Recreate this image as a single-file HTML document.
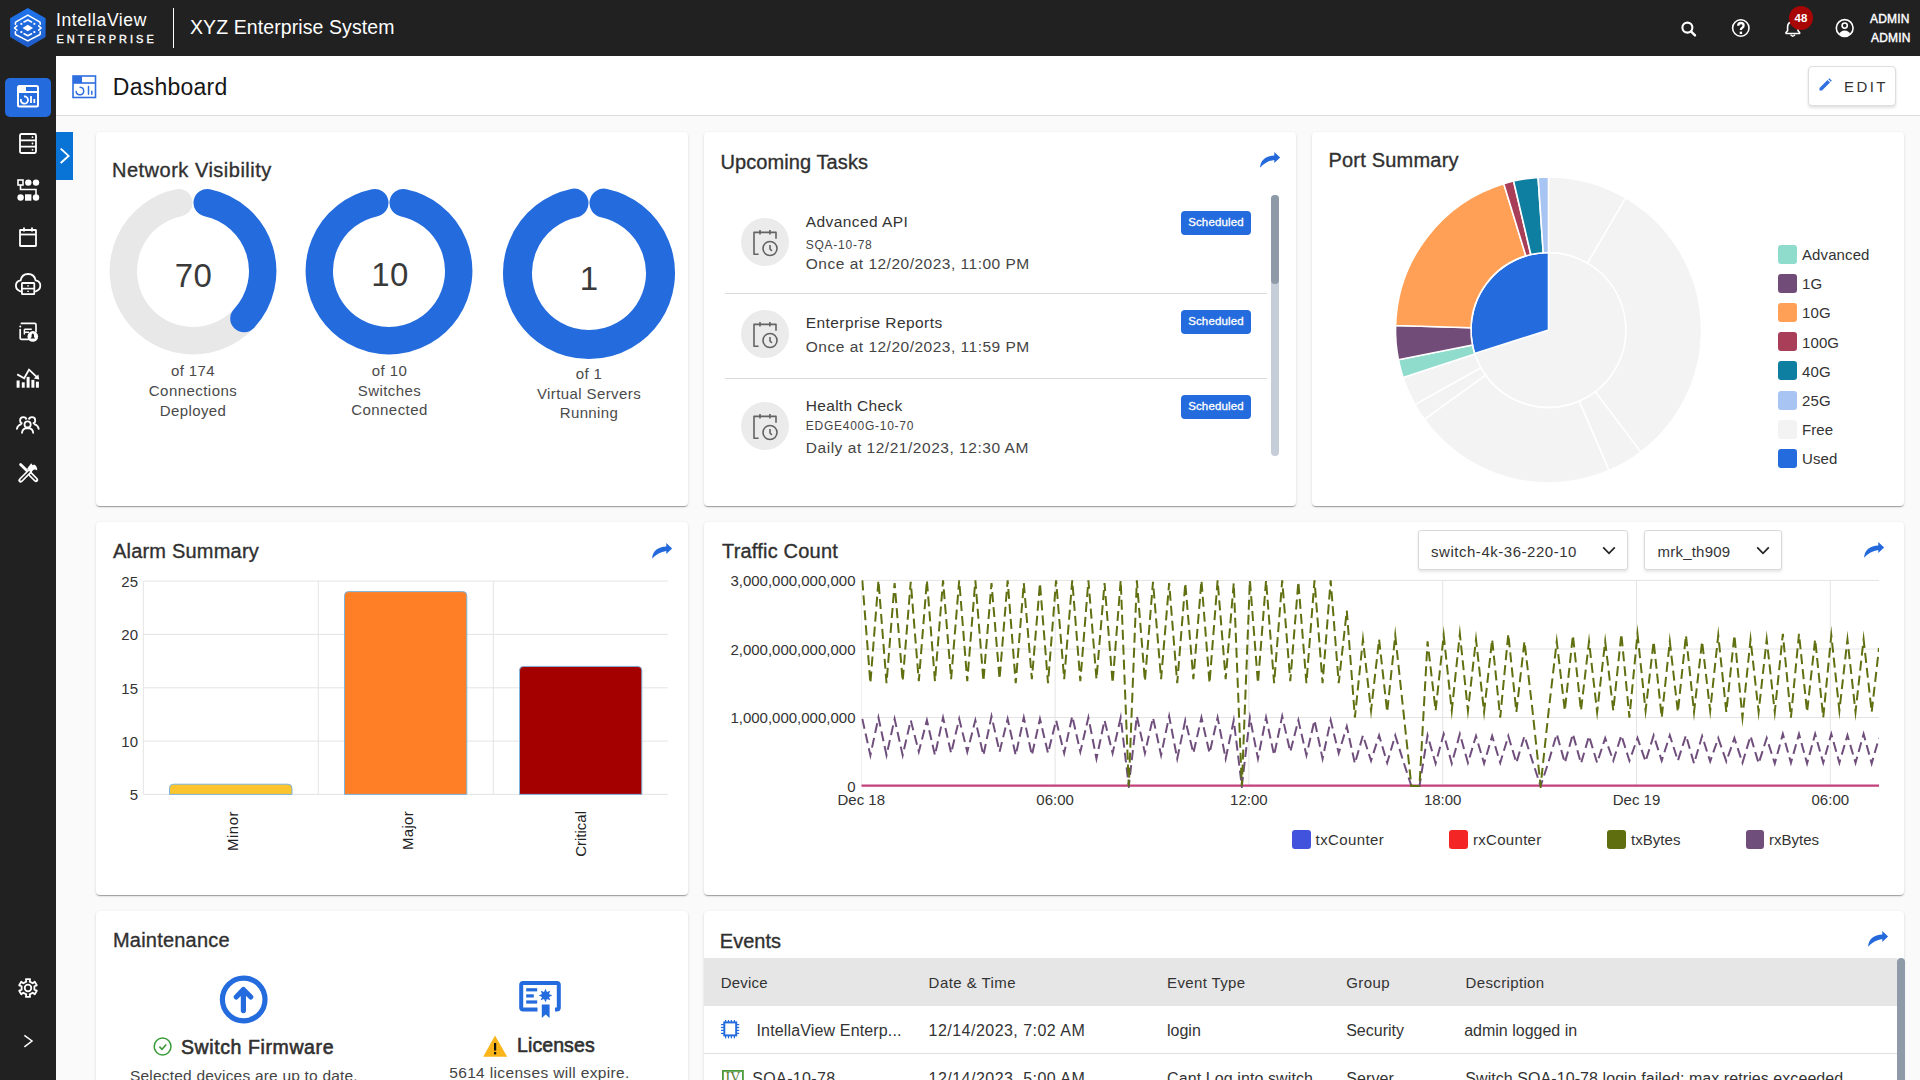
<!DOCTYPE html><html><head><meta charset="utf-8"><style>
html,body{margin:0;padding:0;width:1920px;height:1080px;overflow:hidden;background:#fafafa;font-family:"Liberation Sans",sans-serif;}
.t{position:absolute;white-space:nowrap;}
.card{position:absolute;background:#fff;border-radius:4px;box-shadow:0px 2px 1px -1px rgba(0,0,0,0.2),0px 1px 1px 0px rgba(0,0,0,0.14),0px 1px 3px 0px rgba(0,0,0,0.12);}
svg{overflow:visible}
</style></head><body>

<div style="position:absolute;left:0px;top:0px;width:1920px;height:56px;background:#212121;"></div>
<div style="position:absolute;left:0px;top:56px;width:56px;height:1024px;background:#212121;"></div>
<div style="position:absolute;left:56px;top:56px;width:1864px;height:59px;background:#fff;border-bottom:1px solid #dcdcdc;"></div>
<div class="card" style="left:96px;top:132px;width:592px;height:374px;"></div>
<div class="card" style="left:704px;top:132px;width:592px;height:374px;"></div>
<div class="card" style="left:1312px;top:132px;width:592px;height:374px;"></div>
<div class="card" style="left:96px;top:522px;width:592px;height:373px;"></div>
<div class="card" style="left:704px;top:522px;width:1200px;height:373px;"></div>
<div class="card" style="left:96px;top:911px;width:592px;height:200px;"></div>
<div class="card" style="left:704px;top:911px;width:1200px;height:200px;"></div>
<div style="position:absolute;left:56px;top:132px;width:17px;height:48px;background:#0a74d6;"></div>
<svg style="position:absolute;left:10px;top:8px;" width="36" height="40" viewBox="0 0 36 40">
<defs><linearGradient id="lg" x1="0" y1="0" x2="0" y2="1"><stop offset="0" stop-color="#1f74ec"/><stop offset="1" stop-color="#1f5cc9"/></linearGradient></defs>
<path d="M17.8,0.9 L34.8,10.6 L34.8,28.6 L17.8,38.5 L0.9,28.6 L0.9,10.6 Z" fill="url(#lg)" stroke="url(#lg)" stroke-width="1.6" stroke-linejoin="round"/>
<path d="M5.4,16.2 L5.4,14.9 Q5.4,14.3 6,13.9 L17.8,7.1 L29.6,13.9 Q30.2,14.3 30.2,14.9 L30.2,16.2" fill="none" stroke="#fff" stroke-width="1.6" stroke-linecap="round" stroke-linejoin="round"/>
<path d="M5.4,23.8 L5.4,25.8 Q5.4,26.4 6,26.8 L17.8,32.9 L29.6,26.8 Q30.2,26.4 30.2,25.8 L30.2,23.8" fill="none" stroke="#fff" stroke-width="1.6" stroke-linecap="round" stroke-linejoin="round"/>
<path d="M6.9,17.8 L4.5,20 L6.9,22.2 M28.7,17.8 L31.1,20 L28.7,22.2" fill="none" stroke="#fff" stroke-width="1.6" stroke-linecap="round" stroke-linejoin="round"/>
<path d="M14,14 L17.8,12 L21.6,14 M14,25.8 L17.8,27.8 L21.6,25.8" fill="none" stroke="#fff" stroke-width="1.6" stroke-linecap="round" stroke-linejoin="round"/>
<path d="M17.8,16.7 L23.1,20 L17.8,23.3 L12.5,20 Z" fill="#fff"/>
<rect x="10.4" y="14.9" width="1.9" height="1.9" fill="#fff"/><rect x="23.4" y="14.9" width="1.9" height="1.9" fill="#fff"/>
<rect x="10.4" y="23.1" width="1.9" height="1.9" fill="#fff"/><rect x="23.4" y="23.1" width="1.9" height="1.9" fill="#fff"/>
</svg>
<div class="t" style="left:56px;top:11.79px;font-size:17.5px;line-height:17.5px;color:#fff;font-weight:400;letter-spacing:0.6px;">IntellaView</div>
<div class="t" style="left:56.5px;top:33.69px;font-size:11px;line-height:11px;color:#fff;font-weight:400;letter-spacing:3.0px;-webkit-text-stroke:0.35px #fff;">ENTERPRISE</div>
<div style="position:absolute;left:172.5px;top:8px;width:1.5px;height:40px;background:#fff;"></div>
<div class="t" style="left:190px;top:18.09px;font-size:19.5px;line-height:19.5px;color:#fff;font-weight:400;letter-spacing:0.09px;">XYZ Enterprise System</div>
<svg style="position:absolute;left:1678px;top:19px;" width="20" height="20" viewBox="0 0 20 20"><circle cx="9.4" cy="8.6" r="5" fill="none" stroke="#fff" stroke-width="2.1"/><path d="M13,12.4 L17,16.4" stroke="#fff" stroke-width="2.4" stroke-linecap="round"/></svg>
<svg style="position:absolute;left:1730px;top:17px;" width="22" height="22" viewBox="0 0 22 22"><circle cx="10.8" cy="11" r="8.2" fill="none" stroke="#fff" stroke-width="1.6"/><path d="M8.2,8.8 Q8.2,6 10.9,6 Q13.6,6 13.6,8.5 Q13.6,10 12,10.9 Q10.9,11.6 10.9,13" fill="none" stroke="#fff" stroke-width="2.3" stroke-linecap="butt"/><rect x="9.7" y="14.6" width="2.4" height="2.4" fill="#fff"/></svg>
<svg style="position:absolute;left:1782px;top:17px;" width="22" height="22" viewBox="0 0 22 22"><path d="M4,16.5 L4,15.5 L5.6,13.8 L5.6,9.8 Q5.6,5.2 10.8,4.6 Q16,5.2 16,9.8 L16,13.8 L17.6,15.5 L17.6,16.5 Z" fill="none" stroke="#fff" stroke-width="1.6" stroke-linejoin="round"/><path d="M8.6,17.6 Q10.8,20.6 13,17.6" fill="none" stroke="#fff" stroke-width="1.6"/></svg>
<svg style="position:absolute;left:1789px;top:6px;" width="24" height="24" viewBox="0 0 24 24"><circle cx="12" cy="12" r="12" fill="#a80505"/></svg>
<div class="t" style="left:1801px;top:12.57px;font-size:11.5px;line-height:11.5px;color:#fff;font-weight:700;transform:translateX(-50%);">48</div>
<svg style="position:absolute;left:1834px;top:17px;" width="22" height="22" viewBox="0 0 22 22"><circle cx="10.7" cy="11" r="8.4" fill="none" stroke="#fff" stroke-width="1.6"/><circle cx="10.7" cy="8.6" r="2.6" fill="none" stroke="#fff" stroke-width="1.6"/><path d="M5.2,17 Q6.8,13.4 10.7,13.4 Q14.6,13.4 16.2,17 Q13.6,19.4 10.7,19.4 Q7.8,19.4 5.2,17 Z" fill="#fff"/></svg>
<div class="t" style="left:1870px;top:12.64px;font-size:12px;line-height:12px;color:#fff;font-weight:400;letter-spacing:0.2px;-webkit-text-stroke:0.4px #fff;">ADMIN</div>
<div class="t" style="left:1871px;top:31.54px;font-size:12px;line-height:12px;color:#fff;font-weight:400;letter-spacing:0.2px;-webkit-text-stroke:0.4px #fff;">ADMIN</div>
<svg style="position:absolute;left:72px;top:75px;" width="25" height="24" viewBox="0 0 25 24"><rect x="1" y="1" width="22.5" height="21.5" fill="none" stroke="#2f6fe0" stroke-width="1.6"/><rect x="1" y="1" width="9" height="7" fill="#2f6fe0"/><path d="M1,8 L23.5,8" stroke="#2f6fe0" stroke-width="1.6"/><path d="M8.1,12.2 A3.8,3.8 0 1 1 4.1,16.4" fill="none" stroke="#2f6fe0" stroke-width="1.5" stroke-linecap="round"/><path d="M16.5,11.6 L16.5,19.3 M19.8,16.2 L19.8,19.3" stroke="#2f6fe0" stroke-width="1.5" stroke-linecap="round"/></svg>
<div class="t" style="left:112.8px;top:75.53px;font-size:23px;line-height:23px;color:#161616;font-weight:400;letter-spacing:0.25px;">Dashboard</div>
<div style="position:absolute;left:1807.5px;top:66px;width:86px;height:38px;border:1px solid #dedede;border-radius:4px;background:#fff;box-shadow:0 2px 3px rgba(0,0,0,0.12);"></div>
<svg style="position:absolute;left:1818px;top:78px;" width="14" height="14" viewBox="0 0 14 14"><path d="M1.5,12.5 L1.5,10 L9.5,2 L12,4.5 L4,12.5 Z" fill="#2f6fe0"/><path d="M10.3,1.2 L11.3,0.2 L13.8,2.7 L12.8,3.7 Z" fill="#2f6fe0"/></svg>
<div class="t" style="left:1844px;top:79.30px;font-size:15px;line-height:15px;color:#333;font-weight:400;letter-spacing:2.4px;">EDIT</div>
<div style="position:absolute;left:5px;top:78px;width:46px;height:39px;background:#246bdd;border-radius:5px;"></div>
<svg style="position:absolute;left:17px;top:85px;" width="22" height="22" viewBox="0 0 22 22"><rect x="1" y="1" width="20" height="20.5" rx="1.5" fill="none" stroke="#fff" stroke-width="2"/><rect x="1" y="1" width="8" height="6" fill="#fff"/><path d="M1,7 L21,7" stroke="#fff" stroke-width="2"/><path d="M7,11.5 A3.6,3.6 0 1 1 4,14" fill="none" stroke="#fff" stroke-width="1.8"/><path d="M14,11 L14,18 M17.3,14 L17.3,18" stroke="#fff" stroke-width="1.8"/></svg>
<svg style="position:absolute;left:19px;top:133px;" width="18" height="21" viewBox="0 0 18 21"><rect x="1" y="1" width="16" height="19" rx="1.5" fill="none" stroke="#fff" stroke-width="1.8"/><path d="M1,7.3 L17,7.3 M1,13.6 L17,13.6" stroke="#fff" stroke-width="1.8"/><circle cx="13.5" cy="4.2" r="0.9" fill="#fff"/><circle cx="13.5" cy="10.5" r="0.9" fill="#fff"/><circle cx="13.5" cy="16.8" r="0.9" fill="#fff"/></svg>
<svg style="position:absolute;left:17px;top:179px;" width="23" height="23" viewBox="0 0 23 23"><rect x="1" y="1" width="5" height="5" fill="none" stroke="#fff" stroke-width="1.6"/><circle cx="11.3" cy="3.6" r="3.2" fill="#fff"/><circle cx="19" cy="3.6" r="3.2" fill="#fff"/><path d="M3.5,6 L3.5,10.5 L19,10.5 L19,16" fill="none" stroke="#fff" stroke-width="1.6"/><circle cx="3.6" cy="18.5" r="3.2" fill="#fff"/><rect x="8" y="15.3" width="6.4" height="6.4" fill="#fff"/><circle cx="19" cy="18.5" r="3.2" fill="#fff"/></svg>
<svg style="position:absolute;left:19px;top:227px;" width="18" height="20" viewBox="0 0 18 20"><rect x="1" y="3" width="16" height="16" rx="0.5" fill="none" stroke="#fff" stroke-width="1.8"/><path d="M1,7.5 L17,7.5" stroke="#fff" stroke-width="1.8"/><path d="M5,0.5 L5,4.5 M13,0.5 L13,4.5" stroke="#fff" stroke-width="1.8"/></svg>
<svg style="position:absolute;left:15px;top:273px;" width="26" height="23" viewBox="0 0 26 23"><path d="M5.4,18.3 Q0.9,17 0.9,12.6 Q0.9,8.2 5.6,7.4 Q6.8,1 13.1,1 Q19.4,1 20.6,7.4 Q25.3,8.2 25.3,12.6 Q25.3,17 20.8,18.3" fill="none" stroke="#fff" stroke-width="1.8" stroke-linecap="round"/><rect x="6.9" y="10" width="12.4" height="11.2" rx="0.6" fill="#212121" stroke="#fff" stroke-width="1.8"/><path d="M6.9,15.6 L19.3,15.6" stroke="#fff" stroke-width="1.6"/><path d="M12.3,12.9 L13.9,12.9 M12.3,18.3 L13.9,18.3" stroke="#fff" stroke-width="1.3"/></svg>
<svg style="position:absolute;left:19px;top:322px;" width="20" height="20" viewBox="0 0 20 20"><path d="M2.4,1.4 L15.6,1.4 Q17,1.4 17,2.8 L17,9.6 M9.2,17.3 L2.6,17.3 Q1.2,17.3 1.2,15.9 L1.2,7.6" fill="none" stroke="#fff" stroke-width="1.7" stroke-linecap="round"/><circle cx="1.3" cy="4.6" r="1" fill="#fff"/><path d="M5.4,7.2 L12.8,7.2 M5.4,10.3 L10,10.3 M5.4,7.2 L5.4,12.4" stroke="#fff" stroke-width="1.5"/><circle cx="13.8" cy="14.4" r="5.3" fill="#fff"/><path d="M11.4,16.6 L16.2,16.6 L15,15 L15,13.2 Q15,11.6 13.8,11.6 Q12.6,11.6 12.6,13.2 L12.6,15 Z" fill="#212121"/></svg>
<svg style="position:absolute;left:16px;top:368px;" width="25" height="21" viewBox="0 0 25 21"><path d="M1.2,6.4 L8.2,10.2 L13,1.6 L21.2,9.4" fill="none" stroke="#fff" stroke-width="1.8" stroke-linejoin="miter"/><path d="M17.8,10.6 L23.2,11.6 L22.4,6.4 Z" fill="#fff"/><rect x="0.6" y="12.5" width="3" height="7.2" fill="#fff"/><rect x="5.8" y="14.3" width="2.9" height="5.4" fill="#fff"/><rect x="10.6" y="8.9" width="3" height="10.8" fill="#fff"/><rect x="15.4" y="11.9" width="3" height="7.8" fill="#fff"/><rect x="19.9" y="13.7" width="3" height="6" fill="#fff"/></svg>
<svg style="position:absolute;left:16px;top:416px;" width="24" height="18" viewBox="0 0 24 18"><circle cx="7.3" cy="4.4" r="3.2" fill="none" stroke="#fff" stroke-width="1.8"/><circle cx="16" cy="4.4" r="3.2" fill="none" stroke="#fff" stroke-width="1.8"/><path d="M0.9,12.9 Q1.6,9.4 4.8,8.4 M22.7,12.9 Q22,9.4 18.8,8.4" fill="none" stroke="#fff" stroke-width="1.8" stroke-linecap="round"/><circle cx="11.6" cy="8.7" r="5.4" fill="#212121"/><path d="M3.6,17.2 Q5,11.4 11.6,11.2 Q18.2,11.4 19.6,17.2 Z" fill="#212121"/><circle cx="11.6" cy="8.4" r="3.1" fill="none" stroke="#fff" stroke-width="1.8"/><path d="M6,16.8 Q6.4,12.2 11.6,12 Q16.8,12.2 17.2,16.8" fill="none" stroke="#fff" stroke-width="1.8" stroke-linecap="round"/></svg>
<svg style="position:absolute;left:19px;top:462px;" width="20" height="21" viewBox="0 0 20 21"><path d="M1.6,2.4 L8.8,9.6" stroke="#fff" stroke-width="2.8" stroke-linecap="round"/><path d="M11.2,12 L17,17.8" stroke="#fff" stroke-width="4.6" stroke-linecap="round"/><path d="M11.6,12.4 L16.6,17.4" stroke="#212121" stroke-width="1.4" stroke-linecap="round"/><path d="M1.6,18.4 L10.6,9.4" stroke="#fff" stroke-width="4.6" stroke-linecap="round"/><path d="M2,18 L10.2,9.8" stroke="#212121" stroke-width="1.4" stroke-linecap="round"/><path d="M8.2,6.4 L12.2,1.2 L13.6,3.2 L15.2,2.4 Q18.4,4 18.2,8.6 Q16.6,7 14.6,7.8 L12,10.4 Z" fill="#fff"/></svg>
<svg style="position:absolute;left:17px;top:976.5px;" width="22" height="22" viewBox="0 0 22 22"><path d="M8.93,2.04 L13.07,2.04 L12.71,4.62 L15.67,6.33 L17.73,4.73 L19.80,8.31 L17.38,9.29 L17.38,12.71 L19.80,13.69 L17.73,17.27 L15.67,15.67 L12.71,17.38 L13.07,19.96 L8.93,19.96 L9.29,17.38 L6.33,15.67 L4.27,17.27 L2.20,13.69 L4.62,12.71 L4.62,9.29 L2.20,8.31 L4.27,4.73 L6.33,6.33 L9.29,4.62 Z" fill="none" stroke="#fff" stroke-width="1.8" stroke-linejoin="round"/><circle cx="11" cy="11" r="3.3" fill="none" stroke="#fff" stroke-width="1.8"/></svg>
<svg style="position:absolute;left:22px;top:1034px;" width="12" height="16" viewBox="0 0 12 16"><path d="M2.4,1.4 L10,7 L2.4,12.8" fill="none" stroke="#fff" stroke-width="1.5"/></svg>
<svg style="position:absolute;left:59px;top:147px;" width="12" height="18" viewBox="0 0 12 18"><path d="M1.7,1.6 L9.6,8.9 L1.7,16" fill="none" stroke="#fff" stroke-width="1.9"/></svg>
<div class="t" style="left:112px;top:159.97px;font-size:20px;line-height:20px;color:#303030;font-weight:400;letter-spacing:0.5px;-webkit-text-stroke:0.35px #303030;">Network Visibility</div>
<svg style="position:absolute;left:0px;top:0px;width:1px;height:1px;" width="1" height="1" viewBox="0 0 1 1"><path d="M243.90,318.62 A69.7,69.7 0 1 1 178.82,202.76" fill="none" stroke="#e8e8e8" stroke-width="27.4" stroke-linecap="round"/><path d="M207.18,202.76 A69.7,69.7 0 0 1 243.90,318.62" fill="none" stroke="#246bdd" stroke-width="27.4" stroke-linecap="round"/><path d="M403.18,202.76 A69.7,69.7 0 1 1 374.82,202.76" fill="none" stroke="#246bdd" stroke-width="27.4" stroke-linecap="round"/><path d="M603.99,203.09 A71.5,71.5 0 1 1 574.01,203.09" fill="none" stroke="#246bdd" stroke-width="29" stroke-linecap="round"/></svg>
<div class="t" style="left:193.5px;top:258.67px;font-size:33px;line-height:33px;color:#3a3a3a;font-weight:400;letter-spacing:0.5px;transform:translateX(-50%);">70</div>
<div class="t" style="left:390px;top:258.47px;font-size:33px;line-height:33px;color:#3a3a3a;font-weight:400;letter-spacing:0.5px;transform:translateX(-50%);">10</div>
<div class="t" style="left:589px;top:261.57px;font-size:33px;line-height:33px;color:#3a3a3a;font-weight:400;transform:translateX(-50%);">1</div>
<div class="t" style="left:193px;top:363.30px;font-size:15px;line-height:15px;color:#4a4a4a;font-weight:400;letter-spacing:0.4px;transform:translateX(-50%);">of 174</div>
<div class="t" style="left:193px;top:383.30px;font-size:15px;line-height:15px;color:#4a4a4a;font-weight:400;letter-spacing:0.45px;transform:translateX(-50%);">Connections</div>
<div class="t" style="left:193px;top:403.30px;font-size:15px;line-height:15px;color:#4a4a4a;font-weight:400;letter-spacing:0.4px;transform:translateX(-50%);">Deployed</div>
<div class="t" style="left:389.5px;top:362.90px;font-size:15px;line-height:15px;color:#4a4a4a;font-weight:400;letter-spacing:0.4px;transform:translateX(-50%);">of 10</div>
<div class="t" style="left:389.5px;top:383.00px;font-size:15px;line-height:15px;color:#4a4a4a;font-weight:400;letter-spacing:0.45px;transform:translateX(-50%);">Switches</div>
<div class="t" style="left:389.5px;top:402.30px;font-size:15px;line-height:15px;color:#4a4a4a;font-weight:400;letter-spacing:0.45px;transform:translateX(-50%);">Connected</div>
<div class="t" style="left:589px;top:365.80px;font-size:15px;line-height:15px;color:#4a4a4a;font-weight:400;letter-spacing:0.4px;transform:translateX(-50%);">of 1</div>
<div class="t" style="left:589px;top:386.10px;font-size:15px;line-height:15px;color:#4a4a4a;font-weight:400;letter-spacing:0.4px;transform:translateX(-50%);">Virtual Servers</div>
<div class="t" style="left:589px;top:405.30px;font-size:15px;line-height:15px;color:#4a4a4a;font-weight:400;letter-spacing:0.4px;transform:translateX(-50%);">Running</div>
<div class="t" style="left:720.4px;top:152.37px;font-size:20px;line-height:20px;color:#303030;font-weight:400;letter-spacing:0.1px;-webkit-text-stroke:0.35px #303030;">Upcoming Tasks</div>
<svg style="position:absolute;left:1259.8px;top:151.2px;" width="21" height="18" viewBox="0 0 21 18"><path d="M14.3,0.9 L20.1,6.5 L14.3,12 L14.3,8.9 Q6,10 0.1,16.7 C0.5,9 6,4.8 14.3,4.6 Z" fill="#2469dc"/></svg>
<svg style="position:absolute;left:741px;top:218px;" width="48" height="48" viewBox="0 0 48 48"><circle cx="24" cy="24" r="24" fill="#ebebeb"/><path d="M17.6,36.2 L13,36.2 L13,14.4 L35,14.4 L35,20.8" fill="none" stroke="#636363" stroke-width="1.6" stroke-linejoin="round"/><path d="M19,12 L19,16.6 M28.9,12 L28.9,16.6" stroke="#636363" stroke-width="1.6"/><circle cx="29" cy="30.5" r="7" fill="none" stroke="#636363" stroke-width="1.6"/><path d="M29,27 L29,31 L30.9,32.9" fill="none" stroke="#636363" stroke-width="1.6"/></svg>
<svg style="position:absolute;left:741px;top:310px;" width="48" height="48" viewBox="0 0 48 48"><circle cx="24" cy="24" r="24" fill="#ebebeb"/><path d="M17.6,36.2 L13,36.2 L13,14.4 L35,14.4 L35,20.8" fill="none" stroke="#636363" stroke-width="1.6" stroke-linejoin="round"/><path d="M19,12 L19,16.6 M28.9,12 L28.9,16.6" stroke="#636363" stroke-width="1.6"/><circle cx="29" cy="30.5" r="7" fill="none" stroke="#636363" stroke-width="1.6"/><path d="M29,27 L29,31 L30.9,32.9" fill="none" stroke="#636363" stroke-width="1.6"/></svg>
<svg style="position:absolute;left:741px;top:402px;" width="48" height="48" viewBox="0 0 48 48"><circle cx="24" cy="24" r="24" fill="#ebebeb"/><path d="M17.6,36.2 L13,36.2 L13,14.4 L35,14.4 L35,20.8" fill="none" stroke="#636363" stroke-width="1.6" stroke-linejoin="round"/><path d="M19,12 L19,16.6 M28.9,12 L28.9,16.6" stroke="#636363" stroke-width="1.6"/><circle cx="29" cy="30.5" r="7" fill="none" stroke="#636363" stroke-width="1.6"/><path d="M29,27 L29,31 L30.9,32.9" fill="none" stroke="#636363" stroke-width="1.6"/></svg>
<div class="t" style="left:805.8px;top:213.58px;font-size:15.5px;line-height:15.5px;color:#333;font-weight:400;letter-spacing:0.42px;">Advanced API</div>
<div class="t" style="left:805.8px;top:238.64px;font-size:12px;line-height:12px;color:#444;font-weight:400;letter-spacing:0.74px;">SQA-10-78</div>
<div class="t" style="left:805.8px;top:255.58px;font-size:15.5px;line-height:15.5px;color:#444;font-weight:400;letter-spacing:0.5px;">Once at 12/20/2023, 11:00 PM</div>
<div class="t" style="left:805.8px;top:314.88px;font-size:15.5px;line-height:15.5px;color:#333;font-weight:400;letter-spacing:0.42px;">Enterprise Reports</div>
<div class="t" style="left:805.8px;top:338.88px;font-size:15.5px;line-height:15.5px;color:#444;font-weight:400;letter-spacing:0.5px;">Once at 12/20/2023, 11:59 PM</div>
<div class="t" style="left:805.8px;top:397.68px;font-size:15.5px;line-height:15.5px;color:#333;font-weight:400;letter-spacing:0.3px;">Health Check</div>
<div class="t" style="left:805.8px;top:419.54px;font-size:12px;line-height:12px;color:#444;font-weight:400;letter-spacing:0.73px;">EDGE400G-10-70</div>
<div class="t" style="left:805.8px;top:439.68px;font-size:15.5px;line-height:15.5px;color:#444;font-weight:400;letter-spacing:0.53px;">Daily at 12/21/2023, 12:30 AM</div>
<div style="position:absolute;left:725px;top:293px;width:542px;height:1px;background:#dcdcdc;"></div>
<div style="position:absolute;left:725px;top:378px;width:542px;height:1px;background:#dcdcdc;"></div>
<div style="position:absolute;left:1181px;top:211px;width:70px;height:24px;background:#246bdd;border-radius:4px;"></div>
<div class="t" style="left:1216px;top:217.27px;font-size:11.5px;line-height:11.5px;color:#fff;font-weight:400;letter-spacing:0.15px;-webkit-text-stroke:0.3px #fff;transform:translateX(-50%);">Scheduled</div>
<div style="position:absolute;left:1181px;top:310px;width:70px;height:24px;background:#246bdd;border-radius:4px;"></div>
<div class="t" style="left:1216px;top:316.27px;font-size:11.5px;line-height:11.5px;color:#fff;font-weight:400;letter-spacing:0.15px;-webkit-text-stroke:0.3px #fff;transform:translateX(-50%);">Scheduled</div>
<div style="position:absolute;left:1181px;top:395px;width:70px;height:24px;background:#246bdd;border-radius:4px;"></div>
<div class="t" style="left:1216px;top:401.27px;font-size:11.5px;line-height:11.5px;color:#fff;font-weight:400;letter-spacing:0.15px;-webkit-text-stroke:0.3px #fff;transform:translateX(-50%);">Scheduled</div>
<div style="position:absolute;left:1271px;top:195px;width:8px;height:261px;background:#c5ced8;border-radius:4px;"></div>
<div style="position:absolute;left:1271px;top:195px;width:8px;height:89px;background:#8e9aa8;border-radius:4px;"></div>
<div class="t" style="left:1328.5px;top:150.47px;font-size:20px;line-height:20px;color:#303030;font-weight:400;letter-spacing:0.2px;-webkit-text-stroke:0.35px #303030;">Port Summary</div>
<svg style="position:absolute;left:0px;top:0px;width:1px;height:1px;" width="1" height="1" viewBox="0 0 1 1"><path d="M1548.5,330 L1548.50,252.50 A77.5,77.5 0 1 1 1474.67,353.56 Z" fill="#f3f3f3" stroke="#fff" stroke-width="1.6" stroke-linejoin="round"/><path d="M1548.5,330 L1474.67,353.56 A77.5,77.5 0 0 1 1548.50,252.50 Z" fill="#246bdd" stroke="#fff" stroke-width="1.6" stroke-linejoin="round"/><path d="M1548.50,177.00 A153,153 0 0 1 1625.69,197.90 L1587.60,263.09 A77.5,77.5 0 0 0 1548.50,252.50 Z" fill="#f3f3f3" stroke="#fff" stroke-width="1.6" stroke-linejoin="round"/><path d="M1625.69,197.90 A153,153 0 0 1 1640.79,452.03 L1595.25,391.81 A77.5,77.5 0 0 0 1587.60,263.09 Z" fill="#f3f3f3" stroke="#fff" stroke-width="1.6" stroke-linejoin="round"/><path d="M1640.79,452.03 A153,153 0 0 1 1609.02,470.52 L1579.15,401.18 A77.5,77.5 0 0 0 1595.25,391.81 Z" fill="#f3f3f3" stroke="#fff" stroke-width="1.6" stroke-linejoin="round"/><path d="M1609.02,470.52 A153,153 0 0 1 1424.25,419.28 L1485.56,375.22 A77.5,77.5 0 0 0 1579.15,401.18 Z" fill="#f3f3f3" stroke="#fff" stroke-width="1.6" stroke-linejoin="round"/><path d="M1424.25,419.28 A153,153 0 0 1 1414.94,404.64 L1480.85,367.81 A77.5,77.5 0 0 0 1485.56,375.22 Z" fill="#f3f3f3" stroke="#fff" stroke-width="1.6" stroke-linejoin="round"/><path d="M1414.94,404.64 A153,153 0 0 1 1403.07,377.53 L1474.84,354.08 A77.5,77.5 0 0 0 1480.85,367.81 Z" fill="#f3f3f3" stroke="#fff" stroke-width="1.6" stroke-linejoin="round"/><path d="M1403.07,377.53 A153,153 0 0 1 1398.41,359.72 L1472.48,345.05 A77.5,77.5 0 0 0 1474.84,354.08 Z" fill="#8fdccd" stroke="#fff" stroke-width="1.6" stroke-linejoin="round"/><path d="M1398.41,359.72 A153,153 0 0 1 1395.57,325.46 L1471.03,327.70 A77.5,77.5 0 0 0 1472.48,345.05 Z" fill="#714c78" stroke="#fff" stroke-width="1.6" stroke-linejoin="round"/><path d="M1395.57,325.46 A153,153 0 0 1 1503.77,183.69 L1525.84,255.89 A77.5,77.5 0 0 0 1471.03,327.70 Z" fill="#ffa056" stroke="#fff" stroke-width="1.6" stroke-linejoin="round"/><path d="M1503.77,183.69 A153,153 0 0 1 1513.56,181.04 L1530.80,254.55 A77.5,77.5 0 0 0 1525.84,255.89 Z" fill="#a83e57" stroke="#fff" stroke-width="1.6" stroke-linejoin="round"/><path d="M1513.56,181.04 A153,153 0 0 1 1538.09,177.35 L1543.23,252.68 A77.5,77.5 0 0 0 1530.80,254.55 Z" fill="#0e7fa1" stroke="#fff" stroke-width="1.6" stroke-linejoin="round"/><path d="M1538.09,177.35 A153,153 0 0 1 1548.50,177.00 L1548.50,252.50 A77.5,77.5 0 0 0 1543.23,252.68 Z" fill="#a8c4f2" stroke="#fff" stroke-width="1.6" stroke-linejoin="round"/></svg>
<div style="position:absolute;left:1778px;top:244.6px;width:19px;height:19px;background:#8fdccd;border-radius:3px;"></div>
<div class="t" style="left:1802px;top:246.90px;font-size:15px;line-height:15px;color:#333;font-weight:400;letter-spacing:0.1px;">Advanced</div>
<div style="position:absolute;left:1778px;top:273.8px;width:19px;height:19px;background:#714c78;border-radius:3px;"></div>
<div class="t" style="left:1802px;top:276.10px;font-size:15px;line-height:15px;color:#333;font-weight:400;letter-spacing:0.1px;">1G</div>
<div style="position:absolute;left:1778px;top:303.0px;width:19px;height:19px;background:#ffa056;border-radius:3px;"></div>
<div class="t" style="left:1802px;top:305.30px;font-size:15px;line-height:15px;color:#333;font-weight:400;letter-spacing:0.1px;">10G</div>
<div style="position:absolute;left:1778px;top:332.2px;width:19px;height:19px;background:#a83e57;border-radius:3px;"></div>
<div class="t" style="left:1802px;top:334.50px;font-size:15px;line-height:15px;color:#333;font-weight:400;letter-spacing:0.1px;">100G</div>
<div style="position:absolute;left:1778px;top:361.4px;width:19px;height:19px;background:#0e7fa1;border-radius:3px;"></div>
<div class="t" style="left:1802px;top:363.70px;font-size:15px;line-height:15px;color:#333;font-weight:400;letter-spacing:0.1px;">40G</div>
<div style="position:absolute;left:1778px;top:390.6px;width:19px;height:19px;background:#a8c4f2;border-radius:3px;"></div>
<div class="t" style="left:1802px;top:392.90px;font-size:15px;line-height:15px;color:#333;font-weight:400;letter-spacing:0.1px;">25G</div>
<div style="position:absolute;left:1778px;top:419.79999999999995px;width:19px;height:19px;background:#f3f3f3;border-radius:3px;"></div>
<div class="t" style="left:1802px;top:422.10px;font-size:15px;line-height:15px;color:#333;font-weight:400;letter-spacing:0.1px;">Free</div>
<div style="position:absolute;left:1778px;top:449.0px;width:19px;height:19px;background:#246bdd;border-radius:3px;"></div>
<div class="t" style="left:1802px;top:451.30px;font-size:15px;line-height:15px;color:#333;font-weight:400;letter-spacing:0.1px;">Used</div>
<div class="t" style="left:113px;top:541.07px;font-size:20px;line-height:20px;color:#303030;font-weight:400;letter-spacing:0.2px;-webkit-text-stroke:0.35px #303030;">Alarm Summary</div>
<svg style="position:absolute;left:651.7px;top:541.7px;" width="21" height="18" viewBox="0 0 21 18"><path d="M14.3,0.9 L20.1,6.5 L14.3,12 L14.3,8.9 Q6,10 0.1,16.7 C0.5,9 6,4.8 14.3,4.6 Z" fill="#2469dc"/></svg>
<svg style="position:absolute;left:0px;top:0px;width:1px;height:1px;" width="1" height="1" viewBox="0 0 1 1"><path d="M143.3,581.1 L667.8,581.1" stroke="#e4e4e4" stroke-width="1"/><path d="M143.3,634.4 L667.8,634.4" stroke="#e4e4e4" stroke-width="1"/><path d="M143.3,687.8 L667.8,687.8" stroke="#e4e4e4" stroke-width="1"/><path d="M143.3,741.1 L667.8,741.1" stroke="#e4e4e4" stroke-width="1"/><path d="M143.3,794.4 L667.8,794.4" stroke="#e4e4e4" stroke-width="1"/><path d="M143.3,581.1 L143.3,794.4" stroke="#e4e4e4" stroke-width="1"/><path d="M318.3,581.1 L318.3,794.4" stroke="#e4e4e4" stroke-width="1"/><path d="M493.3,581.1 L493.3,794.4" stroke="#e4e4e4" stroke-width="1"/><path d="M169.5,794.4 L169.5,788.2 Q169.5,784.2 173.5,784.2 L288,784.2 Q292,784.2 292,788.2 L292,794.4 Z" fill="#fcc42d" stroke="#7db4dd" stroke-width="1"/><path d="M344.5,794.4 L344.5,595.6 Q344.5,591.6 348.5,591.6 L462.8,591.6 Q466.8,591.6 466.8,595.6 L466.8,794.4 Z" fill="#ff7f27" stroke="#7db4dd" stroke-width="1"/><path d="M519.5,794.4 L519.5,670.4 Q519.5,666.4 523.5,666.4 L637.8,666.4 Q641.8,666.4 641.8,670.4 L641.8,794.4 Z" fill="#a50000" stroke="#7db4dd" stroke-width="1"/></svg>
<div class="t" style="left:138px;top:574.00px;font-size:15px;line-height:15px;color:#333;font-weight:400;transform:translateX(-100%);">25</div>
<div class="t" style="left:138px;top:627.30px;font-size:15px;line-height:15px;color:#333;font-weight:400;transform:translateX(-100%);">20</div>
<div class="t" style="left:138px;top:680.70px;font-size:15px;line-height:15px;color:#333;font-weight:400;transform:translateX(-100%);">15</div>
<div class="t" style="left:138px;top:734.00px;font-size:15px;line-height:15px;color:#333;font-weight:400;transform:translateX(-100%);">10</div>
<div class="t" style="left:138px;top:787.30px;font-size:15px;line-height:15px;color:#333;font-weight:400;transform:translateX(-100%);">5</div>
<div class="t" style="left:231.5px;top:811px;font-size:15px;line-height:15px;color:#222;letter-spacing:0.5px;transform-origin:0 0;transform:rotate(-90deg) translate(-100%, -7.30px);">Minor</div>
<div class="t" style="left:406.5px;top:811px;font-size:15px;line-height:15px;color:#222;letter-spacing:0.3px;transform-origin:0 0;transform:rotate(-90deg) translate(-100%, -7.30px);">Major</div>
<div class="t" style="left:580px;top:811px;font-size:15px;line-height:15px;color:#222;letter-spacing:0px;transform-origin:0 0;transform:rotate(-90deg) translate(-100%, -7.30px);">Critical</div>
<div class="t" style="left:722px;top:541.07px;font-size:20px;line-height:20px;color:#303030;font-weight:400;letter-spacing:0.2px;-webkit-text-stroke:0.35px #303030;">Traffic Count</div>
<svg style="position:absolute;left:1863.7px;top:540.8px;" width="21" height="18" viewBox="0 0 21 18"><path d="M14.3,0.9 L20.1,6.5 L14.3,12 L14.3,8.9 Q6,10 0.1,16.7 C0.5,9 6,4.8 14.3,4.6 Z" fill="#2469dc"/></svg>
<div style="position:absolute;left:1417.5px;top:530px;width:208px;height:38px;border:1px solid #d9d9d9;border-radius:3px;background:#fff;box-shadow:0 2px 3px rgba(0,0,0,0.10);"></div>
<div style="position:absolute;left:1643.5px;top:530px;width:136px;height:38px;border:1px solid #d9d9d9;border-radius:3px;background:#fff;box-shadow:0 2px 3px rgba(0,0,0,0.10);"></div>
<div class="t" style="left:1431px;top:544.30px;font-size:15px;line-height:15px;color:#333;font-weight:400;letter-spacing:0.53px;">switch-4k-36-220-10</div>
<div class="t" style="left:1657.6px;top:544.30px;font-size:15px;line-height:15px;color:#333;font-weight:400;letter-spacing:0.2px;">mrk_th909</div>
<svg style="position:absolute;left:1601.5px;top:546px;" width="14" height="9" viewBox="0 0 14 9"><path d="M1.2,1.4 L7,7.4 L12.8,1.4" fill="none" stroke="#222" stroke-width="1.7"/></svg>
<svg style="position:absolute;left:1755.5px;top:546px;" width="14" height="9" viewBox="0 0 14 9"><path d="M1.2,1.4 L7,7.4 L12.8,1.4" fill="none" stroke="#222" stroke-width="1.7"/></svg>
<svg style="position:absolute;left:0;top:0;" width="1920" height="1080" viewBox="0 0 1920 1080"><defs><clipPath id="pc"><rect x="861.3" y="578.4" width="1017.7" height="209.70000000000005"/></clipPath></defs><g clip-path="url(#pc)"><path d="M861.3,580.4 L1879,580.4" stroke="#e4e4e4" stroke-width="1"/><path d="M861.3,649.0 L1879,649.0" stroke="#e4e4e4" stroke-width="1"/><path d="M861.3,717.5 L1879,717.5" stroke="#e4e4e4" stroke-width="1"/><path d="M861.3,786.1 L1879,786.1" stroke="#e4e4e4" stroke-width="1"/><path d="M861.3,580.4 L861.3,786.1" stroke="#e4e4e4" stroke-width="1"/><path d="M1055.1,580.4 L1055.1,786.1" stroke="#e4e4e4" stroke-width="1"/><path d="M1248.9,580.4 L1248.9,786.1" stroke="#e4e4e4" stroke-width="1"/><path d="M1442.7,580.4 L1442.7,786.1" stroke="#e4e4e4" stroke-width="1"/><path d="M1636.5,580.4 L1636.5,786.1" stroke="#e4e4e4" stroke-width="1"/><path d="M1830.3,580.4 L1830.3,786.1" stroke="#e4e4e4" stroke-width="1"/><path d="M861.3,785.6 L1879,785.6" stroke="#c5417c" stroke-width="2.2"/><path d="M862.30,718.90 L870.38,755.25 L878.45,717.53 L886.52,755.25 L894.60,718.90 L902.67,755.25 L910.75,720.28 L918.82,751.82 L926.90,720.28 L934.97,755.25 L943.05,717.53 L951.12,753.19 L959.20,718.90 L967.27,751.82 L975.35,720.28 L983.42,755.25 L991.50,716.16 L999.57,751.82 L1007.65,718.90 L1015.72,755.25 L1023.80,717.53 L1031.88,755.25 L1039.95,718.90 L1048.03,753.19 L1056.10,720.28 L1064.17,753.19 L1072.25,716.16 L1080.33,751.82 L1088.40,717.53 L1096.47,758.67 L1104.55,720.28 L1112.62,753.19 L1120.70,717.53 L1128.78,786.10 L1136.85,716.16 L1144.92,753.19 L1153.00,717.53 L1161.08,755.25 L1169.15,716.16 L1177.22,758.67 L1185.30,720.28 L1193.38,753.19 L1201.45,717.53 L1209.53,753.19 L1217.60,717.53 L1225.67,758.67 L1233.75,720.28 L1241.83,786.10 L1249.90,717.53 L1257.97,758.67 L1266.05,717.53 L1274.12,755.25 L1282.20,716.16 L1290.28,751.82 L1298.35,720.28 L1306.42,755.25 L1314.50,720.28 L1322.58,758.67 L1330.65,720.28 L1338.72,753.19 L1346.80,726.45 L1354.88,763.47 L1362.95,735.36 L1371.03,760.73 L1379.10,735.36 L1387.18,762.79 L1395.25,735.36 L1403.33,761.42 L1411.40,786.10 L1419.47,786.10 L1427.55,735.36 L1435.62,763.47 L1443.70,733.99 L1451.78,763.47 L1459.85,733.99 L1467.93,762.79 L1476.00,736.05 L1484.08,763.47 L1492.15,736.05 L1500.22,762.79 L1508.30,736.05 L1516.38,762.79 L1524.45,736.05 L1532.53,761.42 L1540.60,786.10 L1548.68,761.42 L1556.75,733.99 L1564.83,762.79 L1572.90,733.99 L1580.97,763.47 L1589.05,736.05 L1597.12,762.79 L1605.20,738.10 L1613.28,760.73 L1621.35,735.36 L1629.43,760.73 L1637.50,738.10 L1645.58,761.42 L1653.65,735.36 L1661.72,760.73 L1669.80,735.36 L1677.88,760.73 L1685.95,735.36 L1694.03,763.47 L1702.10,736.05 L1710.18,761.42 L1718.25,738.10 L1726.33,761.42 L1734.40,738.10 L1742.47,762.79 L1750.55,736.05 L1758.62,763.47 L1766.70,738.10 L1774.78,763.47 L1782.85,733.99 L1790.93,762.79 L1799.00,733.99 L1807.08,763.47 L1815.15,733.99 L1823.23,762.79 L1831.30,733.99 L1839.38,762.79 L1847.45,735.36 L1855.53,762.79 L1863.60,733.99 L1871.68,763.47 L1879.00,737.97" fill="none" stroke="#6f4e7c" stroke-width="2" stroke-dasharray="10,5" stroke-linejoin="miter" stroke-miterlimit="10"/><path d="M862.30,580.40 L870.38,683.25 L878.45,580.40 L886.52,683.25 L894.60,583.14 L902.67,681.19 L910.75,581.77 L918.82,681.19 L926.90,580.40 L934.97,681.19 L943.05,580.40 L951.12,679.14 L959.20,580.40 L967.27,681.19 L975.35,580.40 L983.42,681.19 L991.50,583.14 L999.57,679.14 L1007.65,580.40 L1015.72,683.25 L1023.80,583.14 L1031.88,679.14 L1039.95,583.14 L1048.03,683.25 L1056.10,580.40 L1064.17,679.14 L1072.25,580.40 L1080.33,681.19 L1088.40,580.40 L1096.47,679.14 L1104.55,583.14 L1112.62,683.25 L1120.70,580.40 L1128.78,786.10 L1136.85,580.40 L1144.92,681.19 L1153.00,581.77 L1161.08,679.14 L1169.15,583.14 L1177.22,683.25 L1185.30,583.14 L1193.38,679.14 L1201.45,580.40 L1209.53,683.25 L1217.60,580.40 L1225.67,679.14 L1233.75,583.14 L1241.83,786.10 L1249.90,580.40 L1257.97,683.25 L1266.05,580.40 L1274.12,683.25 L1282.20,580.40 L1290.28,681.19 L1298.35,581.77 L1306.42,683.25 L1314.50,580.40 L1322.58,683.25 L1330.65,580.40 L1338.72,683.25 L1346.80,610.57 L1354.88,717.53 L1362.95,639.37 L1371.03,710.68 L1379.10,639.37 L1387.18,712.05 L1395.25,635.25 L1403.33,710.68 L1411.40,786.10 L1419.47,786.10 L1427.55,641.42 L1435.62,710.68 L1443.70,635.25 L1451.78,710.68 L1459.85,633.88 L1467.93,710.68 L1476.00,639.37 L1484.08,712.05 L1492.15,639.37 L1500.22,717.53 L1508.30,633.88 L1516.38,712.05 L1524.45,641.42 L1532.53,710.68 L1540.60,786.10 L1548.68,710.68 L1556.75,641.42 L1564.83,710.68 L1572.90,635.25 L1580.97,710.68 L1589.05,641.42 L1597.12,712.05 L1605.20,641.42 L1613.28,710.68 L1621.35,633.88 L1629.43,717.53 L1637.50,633.88 L1645.58,710.68 L1653.65,641.42 L1661.72,717.53 L1669.80,641.42 L1677.88,712.05 L1685.95,635.25 L1694.03,712.05 L1702.10,641.42 L1710.18,710.68 L1718.25,635.25 L1726.33,712.05 L1734.40,635.25 L1742.47,717.53 L1750.55,639.37 L1758.62,712.05 L1766.70,639.37 L1774.78,712.05 L1782.85,633.88 L1790.93,717.53 L1799.00,633.88 L1807.08,712.05 L1815.15,639.37 L1823.23,717.53 L1831.30,635.25 L1839.38,710.68 L1847.45,639.37 L1855.53,712.05 L1863.60,639.37 L1871.68,712.05 L1879.00,647.98" fill="none" stroke="#5f7010" stroke-width="2" stroke-dasharray="10,5" stroke-linejoin="miter" stroke-miterlimit="10"/></g></svg>
<div class="t" style="left:855.5px;top:573.20px;font-size:15px;line-height:15px;color:#333;font-weight:400;transform:translateX(-100%);">3,000,000,000,000</div>
<div class="t" style="left:855.5px;top:641.77px;font-size:15px;line-height:15px;color:#333;font-weight:400;transform:translateX(-100%);">2,000,000,000,000</div>
<div class="t" style="left:855.5px;top:710.34px;font-size:15px;line-height:15px;color:#333;font-weight:400;transform:translateX(-100%);">1,000,000,000,000</div>
<div class="t" style="left:855.5px;top:778.90px;font-size:15px;line-height:15px;color:#333;font-weight:400;transform:translateX(-100%);">0</div>
<div class="t" style="left:861.3px;top:791.70px;font-size:15px;line-height:15px;color:#333;font-weight:400;transform:translateX(-50%);">Dec 18</div>
<div class="t" style="left:1055.1px;top:791.70px;font-size:15px;line-height:15px;color:#333;font-weight:400;transform:translateX(-50%);">06:00</div>
<div class="t" style="left:1248.9px;top:791.70px;font-size:15px;line-height:15px;color:#333;font-weight:400;transform:translateX(-50%);">12:00</div>
<div class="t" style="left:1442.7px;top:791.70px;font-size:15px;line-height:15px;color:#333;font-weight:400;transform:translateX(-50%);">18:00</div>
<div class="t" style="left:1636.5px;top:791.70px;font-size:15px;line-height:15px;color:#333;font-weight:400;transform:translateX(-50%);">Dec 19</div>
<div class="t" style="left:1830.3px;top:791.70px;font-size:15px;line-height:15px;color:#333;font-weight:400;transform:translateX(-50%);">06:00</div>
<div style="position:absolute;left:1292px;top:830.3px;width:18.5px;height:18.5px;background:#4152dd;border-radius:3px;"></div>
<div class="t" style="left:1315.6px;top:832.30px;font-size:15px;line-height:15px;color:#333;font-weight:400;letter-spacing:0.4px;">txCounter</div>
<div style="position:absolute;left:1449px;top:830.3px;width:18.5px;height:18.5px;background:#f42525;border-radius:3px;"></div>
<div class="t" style="left:1473px;top:832.30px;font-size:15px;line-height:15px;color:#333;font-weight:400;letter-spacing:0.3px;">rxCounter</div>
<div style="position:absolute;left:1607px;top:830.3px;width:18.5px;height:18.5px;background:#5f6f10;border-radius:3px;"></div>
<div class="t" style="left:1631px;top:832.30px;font-size:15px;line-height:15px;color:#333;font-weight:400;letter-spacing:0.05px;">txBytes</div>
<div style="position:absolute;left:1745.5px;top:830.3px;width:18.5px;height:18.5px;background:#6f4e7c;border-radius:3px;"></div>
<div class="t" style="left:1769px;top:832.30px;font-size:15px;line-height:15px;color:#333;font-weight:400;">rxBytes</div>
<div class="t" style="left:113px;top:929.77px;font-size:20px;line-height:20px;color:#303030;font-weight:400;letter-spacing:0.2px;-webkit-text-stroke:0.35px #303030;">Maintenance</div>
<svg style="position:absolute;left:219px;top:975px;" width="50" height="50" viewBox="0 0 50 50"><circle cx="24.7" cy="24.5" r="21.3" fill="none" stroke="#246bdd" stroke-width="5.2"/><path d="M24.4,35.6 L24.4,15.2 M17.2,22 L24.4,14.6 L31.8,22" fill="none" stroke="#246bdd" stroke-width="5.2" stroke-linecap="round" stroke-linejoin="round"/></svg>
<svg style="position:absolute;left:153px;top:1036.5px;" width="20" height="20" viewBox="0 0 20 20"><circle cx="9.6" cy="9.5" r="8.4" fill="none" stroke="#3b9b3b" stroke-width="1.5"/><path d="M6.4,9.6 L9,12.3 L13.2,7.4" fill="none" stroke="#3b9b3b" stroke-width="1.6"/></svg>
<div class="t" style="left:181px;top:1038.29px;font-size:19.5px;line-height:19.5px;color:#303030;font-weight:400;letter-spacing:0.6px;-webkit-text-stroke:0.6px #303030;">Switch Firmware</div>
<div class="t" style="left:130px;top:1068.28px;font-size:15.5px;line-height:15.5px;color:#444;font-weight:400;letter-spacing:0.2px;">Selected devices are up to date.</div>
<svg style="position:absolute;left:520px;top:981.5px;" width="40" height="37" viewBox="0 0 40 37"><path d="M17.5,27.5 L3.2,27.5 Q1.2,27.5 1.2,25.5 L1.2,3 Q1.2,1 3.2,1 L36.8,1 Q38.8,1 38.8,3 L38.8,25.5 Q38.8,27.5 36.8,27.5 L35,27.5" fill="none" stroke="#246bdd" stroke-width="4"/>
<rect x="6.2" y="6.2" width="11" height="3.2" fill="#246bdd"/><rect x="6.2" y="12.3" width="7.6" height="3.2" fill="#246bdd"/><rect x="6.2" y="18.4" width="11" height="3.2" fill="#246bdd"/>
<path d="M21.8,22.5 L29.6,22.5 L29.6,36 L25.7,32.6 L21.8,36 Z" fill="#246bdd"/><path d="M25.50,6.70 L26.95,9.99 L30.31,8.69 L29.01,12.05 L32.30,13.50 L29.01,14.95 L30.31,18.31 L26.95,17.01 L25.50,20.30 L24.05,17.01 L20.69,18.31 L21.99,14.95 L18.70,13.50 L21.99,12.05 L20.69,8.69 L24.05,9.99 Z" fill="#246bdd"/></svg>
<svg style="position:absolute;left:483px;top:1035px;" width="25" height="22" viewBox="0 0 25 22"><path d="M12,0.5 L24.2,21.8 L0.2,21.8 Z" fill="#fbb51a"/><rect x="11" y="8" width="2.2" height="7.6" fill="#111"/><rect x="11" y="17" width="2.2" height="2.4" fill="#111"/></svg>
<div class="t" style="left:517px;top:1036.29px;font-size:19.5px;line-height:19.5px;color:#303030;font-weight:400;letter-spacing:0.1px;-webkit-text-stroke:0.6px #303030;">Licenses</div>
<div class="t" style="left:449.2px;top:1064.88px;font-size:15.5px;line-height:15.5px;color:#444;font-weight:400;letter-spacing:0.35px;">5614 licenses will expire.</div>
<div class="t" style="left:719.8px;top:930.77px;font-size:20px;line-height:20px;color:#303030;font-weight:400;-webkit-text-stroke:0.35px #303030;">Events</div>
<svg style="position:absolute;left:1868.2px;top:929.8px;" width="21" height="18" viewBox="0 0 21 18"><path d="M14.3,0.9 L20.1,6.5 L14.3,12 L14.3,8.9 Q6,10 0.1,16.7 C0.5,9 6,4.8 14.3,4.6 Z" fill="#2469dc"/></svg>
<div style="position:absolute;left:704px;top:958px;width:1193px;height:48px;background:#e6e6e6;"></div>
<div class="t" style="left:720.7px;top:975.40px;font-size:15px;line-height:15px;color:#333;font-weight:400;letter-spacing:0.2px;">Device</div>
<div class="t" style="left:928.6px;top:975.40px;font-size:15px;line-height:15px;color:#333;font-weight:400;letter-spacing:0.45px;">Date &amp; Time</div>
<div class="t" style="left:1167.1px;top:975.40px;font-size:15px;line-height:15px;color:#333;font-weight:400;letter-spacing:0.35px;">Event Type</div>
<div class="t" style="left:1346.2px;top:975.40px;font-size:15px;line-height:15px;color:#333;font-weight:400;letter-spacing:0.4px;">Group</div>
<div class="t" style="left:1465.6px;top:975.40px;font-size:15px;line-height:15px;color:#333;font-weight:400;letter-spacing:0.35px;">Description</div>
<svg style="position:absolute;left:721px;top:1020px;" width="19" height="19" viewBox="0 0 19 19"><rect x="3.9999999999999996" y="0" width="1.2" height="2.6" fill="#246bdd"/><rect x="3.9999999999999996" y="15.6" width="1.2" height="2.8" fill="#246bdd"/><rect x="0" y="3.9999999999999996" width="2.8" height="1.2" fill="#246bdd"/><rect x="15.4" y="3.9999999999999996" width="2.8" height="1.2" fill="#246bdd"/><rect x="6.9" y="0" width="1.2" height="2.6" fill="#246bdd"/><rect x="6.9" y="15.6" width="1.2" height="2.8" fill="#246bdd"/><rect x="0" y="6.9" width="2.8" height="1.2" fill="#246bdd"/><rect x="15.4" y="6.9" width="2.8" height="1.2" fill="#246bdd"/><rect x="9.8" y="0" width="1.2" height="2.6" fill="#246bdd"/><rect x="9.8" y="15.6" width="1.2" height="2.8" fill="#246bdd"/><rect x="0" y="9.8" width="2.8" height="1.2" fill="#246bdd"/><rect x="15.4" y="9.8" width="2.8" height="1.2" fill="#246bdd"/><rect x="12.8" y="0" width="1.2" height="2.6" fill="#246bdd"/><rect x="12.8" y="15.6" width="1.2" height="2.8" fill="#246bdd"/><rect x="0" y="12.8" width="2.8" height="1.2" fill="#246bdd"/><rect x="15.4" y="12.8" width="2.8" height="1.2" fill="#246bdd"/><rect x="3.3" y="2.4" width="11.9" height="13" fill="none" stroke="#246bdd" stroke-width="2"/></svg>
<div class="t" style="left:756.5px;top:1022.96px;font-size:16px;line-height:16px;color:#333;font-weight:400;letter-spacing:0.15px;">IntellaView Enterp...</div>
<div class="t" style="left:928.6px;top:1022.96px;font-size:16px;line-height:16px;color:#333;font-weight:400;letter-spacing:0.47px;">12/14/2023, 7:02 AM</div>
<div class="t" style="left:1167px;top:1022.96px;font-size:16px;line-height:16px;color:#333;font-weight:400;">login</div>
<div class="t" style="left:1346.2px;top:1022.96px;font-size:16px;line-height:16px;color:#333;font-weight:400;">Security</div>
<div class="t" style="left:1464.2px;top:1022.96px;font-size:16px;line-height:16px;color:#333;font-weight:400;">admin logged in</div>
<div style="position:absolute;left:704px;top:1053px;width:1193px;height:1px;background:#e0e0e0;"></div>
<svg style="position:absolute;left:721.5px;top:1069.5px;" width="22" height="14" viewBox="0 0 22 14"><rect x="0.9" y="0.9" width="20" height="16" fill="none" stroke="#4d9a3a" stroke-width="1.8"/><text x="3.6" y="12.4" font-family="Liberation Serif" font-size="14" fill="#5a7a30">IV</text></svg>
<div class="t" style="left:752.3px;top:1070.96px;font-size:16px;line-height:16px;color:#333;font-weight:400;letter-spacing:0.35px;">SQA-10-78</div>
<div class="t" style="left:928.6px;top:1070.96px;font-size:16px;line-height:16px;color:#333;font-weight:400;letter-spacing:0.47px;">12/14/2023, 5:00 AM</div>
<div class="t" style="left:1167px;top:1070.96px;font-size:16px;line-height:16px;color:#333;font-weight:400;letter-spacing:0.1px;">Cant Log into switch</div>
<div class="t" style="left:1346.2px;top:1070.96px;font-size:16px;line-height:16px;color:#333;font-weight:400;letter-spacing:0.1px;">Server</div>
<div class="t" style="left:1465.3px;top:1070.96px;font-size:16px;line-height:16px;color:#333;font-weight:400;letter-spacing:0.07px;">Switch SQA-10-78 login failed: max retries exceeded</div>
<div style="position:absolute;left:1897px;top:958px;width:7.5px;height:130px;background:#8e9aa8;border-radius:4px 4px 0 0;"></div>
</body></html>
